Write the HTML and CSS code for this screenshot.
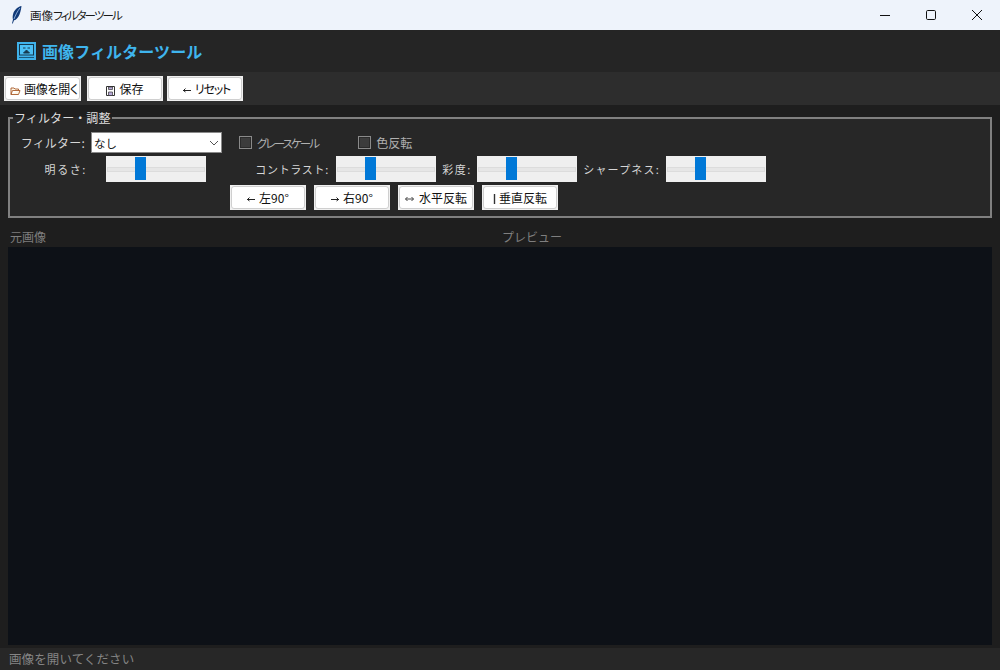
FILE: index.html
```html
<!DOCTYPE html>
<html lang="ja">
<head>
<meta charset="utf-8">
<title>画像フィルターツール</title>
<link rel="stylesheet" href="styles.css">
</head>
<body>
<div class="app">
  <div class="titlebar">
    <svg class="feather" width="14" height="20" viewBox="0 0 14 20"><path d="M12.500 1C9 1.500 5 5 4 9.500c-.5 2.200-.4 3.700 0 5L3 18.500h.8l1.200-3.300C8.500 15 11.500 9.500 12.500 1z" fill="#123a78"/><path d="M11 3C8.500 6 6.500 10 5 14" stroke="#a8c8ee" stroke-width=".8" fill="none"/></svg>
    <span class="wintitle">画像<span class="kana">フィルターツール</span></span>
    <span class="winctrl"><svg width="12" height="12" viewBox="0 0 12 12"><path d="M1 6.500h10" stroke="#111" stroke-width="1"/></svg></span>
    <span class="winctrl"><svg width="12" height="12" viewBox="0 0 12 12"><rect x="1.500" y="1.500" width="9" height="9" rx="1.200" fill="none" stroke="#111"/></svg></span>
    <span class="winctrl"><svg width="12" height="12" viewBox="0 0 12 12"><path d="M1 1l10 10M11 1L1 11" stroke="#111" stroke-width="1"/></svg></span>
  </div>
  <header class="header">
    <svg class="logo" width="19" height="18" viewBox="0 0 19 18"><rect width="19" height="18" fill="#3fb2ea"/><rect x="2.500" y="2.500" width="14" height="10.500" fill="#4cc0f5" stroke="#163a50"/><rect x="2" y="15" width="15" height="1" fill="#1c5a7c"/><path d="M6 6h2.500M10.500 6H13M6.500 11l3-3 3 3z" fill="#163a50" stroke="#163a50"/></svg>
    <h1 class="apptitle">画像フィルターツール</h1>
  </header>
  <nav class="toolbar">
    <button class="btn w77"><span class="face open"><svg class="ic" width="11" height="10" viewBox="0 0 11 10"><path d="M1 8.500V2h3l1 1h3.500v1.500M1 8.500h7.500l1.500-4H2.500z" fill="#fff8e8" stroke="#a85a28" stroke-width=".9"/></svg>画像を開く</span></button>
    <button class="btn w76 gap-a"><span class="face"><svg class="ic" width="9" height="10" viewBox="0 0 9 10"><path d="M.5.500h8v9h-8z" fill="#fff" stroke="#333"/><path d="M2.500 1h4v2.500h-4zM2.500 6h4v3.500h-4z" fill="#b7a9d8" stroke="#333" stroke-width=".7"/></svg>保存</span></button>
    <button class="btn w76 gap-b"><span class="face reset"><svg class="ar" width="8" height="6" viewBox="0 0 8 6"><path d="M0 3.500h8M2.500 1.500L.5 3.500l2 1.500" fill="none" stroke="#222"/></svg><span class="kana-btn">リセット</span></span></button>
  </nav>
  <main class="main">
    <fieldset class="panel">
      <legend class="legend">フィルター・調整</legend>
      <div class="row r1">
        <label class="lbl lbl-filter">フィルター:</label>
        <div class="select"><span>なし</span><svg width="10" height="6" viewBox="0 0 10 6"><path d="M1 1l4 4 4-4" fill="none" stroke="#555"/></svg></div>
        <label class="check c1"><i class="box"></i><span class="tight">グレースケール</span></label>
        <label class="check c2"><i class="box"></i>色反転</label>
      </div>
      <div class="row r2">
        <label class="lbl l-bright">明るさ:</label>
        <div class="slider s-bright"><i class="thumb"></i></div>
        <label class="lbl l-contrast">コントラスト:</label>
        <div class="slider s-contrast"><i class="thumb"></i></div>
        <label class="lbl l-sat">彩度:</label>
        <div class="slider s-sat"><i class="thumb"></i></div>
        <label class="lbl l-sharp">シャープネス:</label>
        <div class="slider s-sharp"><i class="thumb"></i></div>
      </div>
      <div class="row r3">
        <button class="btn w76"><span class="face"><svg class="ar" width="8" height="6" viewBox="0 0 8 6"><path d="M0 3.500h8M2.500 1.500L.5 3.500l2 1.500" fill="none" stroke="#222"/></svg>左90°</span></button>
        <button class="btn w76 g8"><span class="face"><svg class="ar" width="8" height="6" viewBox="0 0 8 6"><path d="M0 3.500h8M5.500 1.500l2 2-2 1.500" fill="none" stroke="#222"/></svg>右90°</span></button>
        <button class="btn w76 g8"><span class="face"><svg class="ar wide" width="9" height="6" viewBox="0 0 9 6"><path d="M.5 3h8M2.500 1L.5 3l2 2M6.500 1l2 2-2 2" fill="none" stroke="#444"/></svg>水平反転</span></button>
        <button class="btn w76 g8"><span class="face"><svg class="ar tall" width="3" height="10" viewBox="0 0 3 10"><path d="M1.500 0v10" fill="none" stroke="#333" stroke-width="1.400"/></svg>垂直反転</span></button>
      </div>
    </fieldset>
    <div class="captions"><span class="cap cap-l">元画像</span><span class="cap">プレビュー</span></div>
    <div class="canvas"></div>
  </main>
  <footer class="status">画像を開いてください</footer>
</div>
</body>
</html>
```
FILE: styles.css
```css
* { box-sizing: border-box; }
html, body { margin: 0; padding: 0; }
body { width: 1000px; height: 670px; overflow: hidden; background: #1e1e1e; font-family: "Noto Sans CJK JP", "Noto Sans", sans-serif; }
.app { display: flex; flex-direction: column; height: 670px; }

.titlebar { height: 30px; background: #eef3fb; display: flex; align-items: center; flex: none; }
.feather { margin-left: 9px; }
.wintitle { margin-left: 7px; font-size: 11.500px; color: #1a1a1a; flex: 1; font-feature-settings: "palt"; }
.kana { letter-spacing: -1.850px; }
.winctrl { width: 46px; height: 30px; display: flex; align-items: center; justify-content: center; }

.header { height: 42px; background: #252525; display: flex; align-items: center; padding-left: 17px; flex: none; }
.apptitle { margin: 0 0 0 6px; font-size: 16px; font-weight: 700; color: #3fb5ee; line-height: 1; letter-spacing: .1px; }

.toolbar { height: 33px; background: #2d2d2d; display: flex; align-items: center; padding: 0 0 0 4px; flex: none; }
.btn { height: 25px; padding: 1px; background: #f0f0f0; border: 0; font-family: inherit; font-size: 12px; color: #111; flex: none; display: flex; font-feature-settings: "palt"; white-space: nowrap; }
.face { flex: 1; display: flex; align-items: center; justify-content: center; background: #fff; border: 1px solid #cfcfcf; border-radius: 3px; }
.face.open { justify-content: flex-start; padding-left: 4px; letter-spacing: -.3px; }
.face.open .ic { margin-right: 3px; }
.face.reset { padding-left: 3px; }
.kana-btn { letter-spacing: -1.200px; }
.w77 { width: 77px; }
.w76 { width: 76px; }
.gap-a { margin-left: 6px; }
.gap-b { margin-left: 4px; }
.g8 { margin-left: 8px; }
.ic { margin-right: 4px; margin-top: 4px; }
.ar { margin-right: 4px; margin-top: 2px; }
.ar.wide { margin-right: 5px; }
.ar.tall { margin-right: 3px; }

.main { flex: 1; padding: 6px 8px 0; display: flex; flex-direction: column; min-height: 0; }
.panel { margin: 0; padding: 0 0 0 10px; height: 107px; border: 2px solid #808080; background: #272727; min-width: 0; display: block; }
.legend { margin-left: -7px; padding: 0 1px; font-size: 12px; line-height: 14px; color: #ddd; letter-spacing: .1px; }
.row { display: flex; align-items: center; }
.r1 { height: 21px; margin-top: 7px; }
.r2 { height: 26px; margin-top: 3px; }
.r3 { height: 25px; margin-top: 3px; padding-left: 210px; }
.lbl { font-size: 11px; color: #d6d6d6; letter-spacing: 1.600px; white-space: nowrap; flex: none; text-align: right; }
.lbl-filter { width: 65px; letter-spacing: .2px; font-size: 12px; }
.select { width: 131px; height: 21px; margin-left: 6px; background: #fff; border: 1px solid #8a8a8a; display: flex; align-items: center; justify-content: space-between; padding: 0 1px 0 2px; font-size: 11.500px; color: #111; flex: none; }
.select svg { margin-right: 1px; }
.check { display: flex; align-items: center; font-size: 12px; color: #b0b0b0; flex: none; font-feature-settings: "palt"; }
.tight { font-size: 11.500px; letter-spacing: -1.900px; }
.box { width: 13px; height: 13px; background: #3c3c3c; border: 1px solid #8a8a8a; margin-right: 5px; box-shadow: inset 0 0 0 1px #2a2a2a; }
.c1 { margin-left: 17px; }
.c2 { margin-left: 40px; }
.l-bright { width: 69px; padding-right: 2px; }
.s-bright { margin-left: 17px; }
.l-contrast { width: 90px; margin-left: 35px; letter-spacing: .7px; padding-right: 2px; }
.s-contrast { margin-left: 5px; }
.l-sat { width: 32px; margin-left: 4px; }
.s-sat { margin-left: 5px; }
.l-sharp { width: 78px; margin-left: 6px; letter-spacing: 1.200px; padding-right: 1px; }
.s-sharp { margin-left: 5px; }
.slider { width: 100px; height: 26px; background: #efefef; position: relative; flex: none; }
.slider::before { content: ""; position: absolute; left: 1px; right: 1px; top: 11px; height: 3px; background: #e6e6e6; border: 1px solid #dcdcdc; }
.thumb { position: absolute; left: 29px; top: 1px; width: 11px; height: 23px; background: #0078d7; }

.captions { display: flex; height: 29px; flex: none; color: #7f7f7f; font-size: 12px; line-height: 18px; padding-top: 10px; }
.cap-l { width: 494px; padding-left: 2px; }
.canvas { flex: none; height: 398px; background: #0d1117; }
.status { height: 22px; margin-top: 3px; background: #272727; color: #848484; font-size: 12.500px; padding-left: 9px; line-height: 22px; flex: none; letter-spacing: .1px; }
```
